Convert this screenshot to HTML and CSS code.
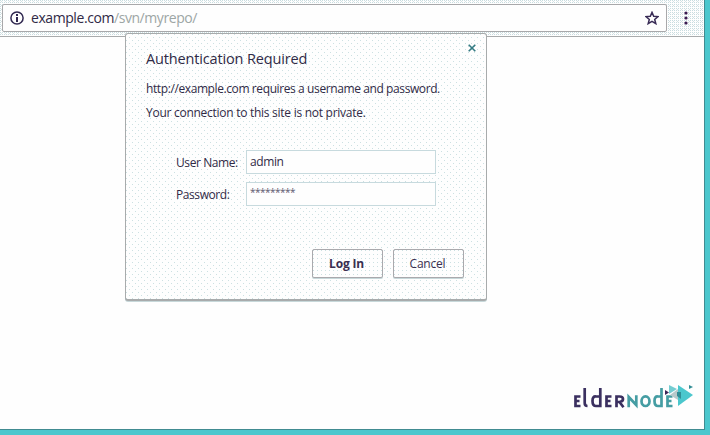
FILE: index.html
```html
<!DOCTYPE html>
<html lang="en">
<head>
<meta charset="utf-8">
<title>example.com/svn/myrepo/</title>
<link rel="stylesheet" href="styles.css">
</head>
<body>
<div class="window">
  <header class="toolbar">
    <div class="address">
      <svg class="info" width="14" height="14" viewBox="0 0 14 14"><circle cx="7" cy="7" r="6.1" fill="none" stroke="#302850" stroke-width="1.5"/><path d="M6 3h2v2H6zM6 6h2v5H6z" fill="#302850"/></svg>
      <span class="url">example.com<span class="path">/svn/myrepo/</span></span>
      <svg class="star" width="14" height="14" viewBox="0 0 14 14"><path d="M7 1.4 8.7 5.3 13 5.6 9.7 8.4 10.8 12.6 7 10.3 3.2 12.6 4.3 8.4 1 5.6 5.3 5.3z" fill="none" stroke="#392c56" stroke-width="1.5"/></svg>
    </div>
    <svg class="more" width="4" height="14" viewBox="0 0 4 14"><g fill="#3b1a50"><circle cx="2" cy="2" r="1.6"/><circle cx="2" cy="7" r="1.6"/><circle cx="2" cy="12" r="1.6"/></g></svg>
  </header>
  <main class="page">
    <svg class="logo" width="122" height="28" viewBox="0 0 122 28">
      <g fill="none" stroke="#3b3060" stroke-width="2.7">
        <path d="M8.500 11.500H3.500V21H8.500M3.500 16H7.500M12.700 3V18Q12.700 21 15.500 21M28.300 3V21H24Q20.500 21 20.500 16T24 11.500H28.300M39.500 11.500H34.500V21H39.500M34.500 16H38.500M44.500 22.300V11.500H47.500Q51 11.500 51 14T47.500 17H44.500M47.500 17 51.500 22.300"/>
      </g>
      <g fill="none" stroke="#459da3" stroke-width="2.7">
        <path d="M56.700 22.300V12L64.300 20V10.300"/><ellipse cx="73.500" cy="16.200" rx="4" ry="4.800"/><path d="M89.500 3V21H86Q82.500 21 82.500 16T86 11.500H89.500M100.500 11.500H95.500V21H100.500M95.500 16H99.500"/>
      </g>
      <path d="M106 0 121 10 106 21z" fill="#4bc7cd"/><path d="M97 0 105 4 97 9z" fill="#74ccd1"/><path d="M98 10 106 4V15z" fill="#b7c9cb"/><path d="M105 7H109V14L105 11z" fill="#328d95"/><path d="M93 5 97 7.500 93 10z" fill="#3b2558"/><path d="M117 0 121 2 117 4z" fill="#328d95"/>
    </svg>
  </main>
</div>
<form class="dialog" onsubmit="return false">
  <button class="close" type="button" aria-label="Close"><svg width="8" height="8" viewBox="0 0 8 8"><path d="M.7.7 7.300 7.300M7.300.7.7 7.300" stroke="#347b83" stroke-width="1.600"/></svg></button>
  <h1>Authentication Required</h1>
  <p class="first">http://example.com requires a username and password.</p>
  <p class="second">Your connection to this site is not private.</p>
  <div class="fields">
    <label for="user">User Name:</label><div class="field" id="user">admin</div>
    <label for="pass">Password:</label><div class="field secret" id="pass">*********</div>
  </div>
  <div class="actions"><button class="btn primary">Log In</button><button class="btn" type="button">Cancel</button></div>
</form>
</body>
</html>
```
FILE: styles.css
```css
* { box-sizing: border-box; }
body {
  margin: 0;
  width: 710px;
  height: 435px;
  overflow: hidden;
  position: relative;
  background: #4bc7cd;
  font: 12px/16px "Open Sans", "Noto Sans", sans-serif;
  color: #302a46;
}
.window {
  width: 705px;
  height: 430px;
  display: flex;
  flex-direction: column;
  background: #fefefe;
  border-right: 1px solid #418b91;
  border-bottom: 1px solid #418b91;
}
.toolbar {
  height: 37px;
  display: flex;
  align-items: flex-start;
  padding: 4px 0 0 2px;
  background:
    conic-gradient(from 270deg at 1px 1px, #c8dcdf 90deg, transparent 0) 0 0 / 2px 2px,
    conic-gradient(from 270deg at 1px 1px, #d8e3e5 90deg, transparent 0) 1px 1px / 4px 4px,
    #fefefe;
  border-bottom: 1px solid #a8abac;
}
.address {
  width: 665px;
  height: 28px;
  display: flex;
  align-items: center;
  padding: 0 7px;
  background: #fefefe;
  border: 1px solid #a8a8aa;
  border-radius: 2px;
}
.url { flex: 1; margin-left: 7px; font-size: 14px; line-height: 20px; letter-spacing: -0.43px; white-space: nowrap; }
.path { color: #9da6a5; }
.more { margin: 7px 0 0 17px; }
.page { flex: 1; display: flex; align-items: flex-end; justify-content: flex-end; padding: 0 10px 16px 0; }
.logo { display: block; }
.dialog {
  position: absolute;
  left: 125px;
  top: 33px;
  width: 362px;
  height: 268px;
  padding: 15px 20px;
  background:
    conic-gradient(from 270deg at 1px 1px, #cce0e2 90deg, transparent 0) 3px 3px / 6px 6px,
    conic-gradient(from 270deg at 1px 1px, #cce0e2 90deg, transparent 0) 0 6px / 6px 6px,
    #fefefe;
  border: 1px solid #a8abac;
  border-bottom-width: 2px;
  border-radius: 3px;
  box-shadow: 0 1px #c7d8da;
}
.close { position: absolute; right: 10px; top: 10px; padding: 0; border: 0; background: none; line-height: 0; }
h1 { margin: 0; font-size: 14.5px; line-height: 20px; font-weight: 400; letter-spacing: -0.15px; white-space: nowrap; }
p { margin: 0; white-space: nowrap; }
.first { margin-top: 12px; letter-spacing: -0.4px; }
.second { margin-top: 8px; letter-spacing: -0.27px; }
.fields {
  display: grid;
  grid-template-columns: 70px 190px;
  grid-auto-rows: 24px;
  row-gap: 8px;
  margin: 29px 0 0 30px;
}
.fields label { padding-top: 5px; letter-spacing: -0.42px; }
.field { padding: 3px; background: #fefefe; border: 1px solid #c7dade; letter-spacing: -0.4px; }
.secret { padding-top: 1px; font-size: 10px; letter-spacing: -0.52px; color: #5c5970; }
.actions { display: flex; justify-content: flex-end; gap: 10px; margin: 43px 2px 0 0; }
.btn {
  width: 71px;
  height: 29px;
  padding: 0 2px 0 0;
  font: inherit;
  letter-spacing: -0.2px;
  color: #3b2f50;
  background: conic-gradient(from 270deg at 1px 1px, #cce0e2 90deg, transparent 0) 0 0 / 4px 4px, #fefefe;
  border: 1px solid #aaa9ad;
  border-radius: 2px;
  box-shadow: 0 1px #c7d8da;
}
.primary { font-weight: 700; }
```
